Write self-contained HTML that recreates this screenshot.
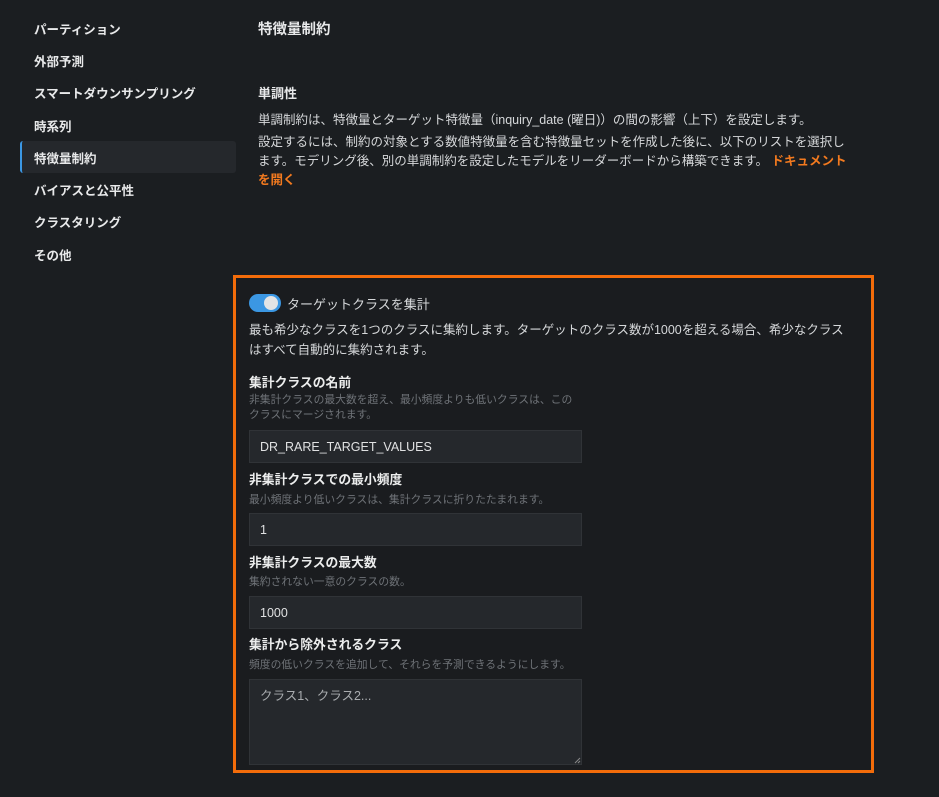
<!DOCTYPE html>
<html><head><meta charset="utf-8"><style>
*{margin:0;padding:0;box-sizing:border-box}
body{width:939px;height:797px;background:#1b1e21;color:#e8e9ea;font-family:"Liberation Sans","Noto Sans CJK JP",sans-serif;position:relative;overflow:hidden}
.a{position:absolute;white-space:nowrap}
.nav{left:34px;font-size:12.5px;font-weight:bold;color:#e8e9ea}
.sel{position:absolute;left:20px;top:141px;width:216px;height:32px;background:#25282c;border-left:2px solid #3b97e3;border-radius:3px}
.p{font-size:12.5px;color:#d6d8da}
.box{position:absolute;left:233px;top:275px;width:641px;height:498px;border:3px solid #f36c0a;background:#1a1c1f}
.lbl{font-size:12.8px;font-weight:bold;color:#eceded}
.hint{font-size:10.8px;color:#6f7378}
.inp{position:absolute;left:249px;width:333px;height:33px;background:#25282c;border:1px solid #303337;font-size:12.5px;color:#e0e1e2;padding:9px 10px;line-height:14px}
</style></head><body>
<div class="a nav" style="top:19px">パーティション</div>
<div class="a nav" style="top:51px">外部予測</div>
<div class="a nav" style="top:83px">スマートダウンサンプリング</div>
<div class="a nav" style="top:116px">時系列</div>
<div class="sel"></div>
<div class="a nav" style="top:148px">特徴量制約</div>
<div class="a nav" style="top:180px">バイアスと公平性</div>
<div class="a nav" style="top:212px">クラスタリング</div>
<div class="a nav" style="top:245px">その他</div>

<div class="a" style="left:258px;top:18px;font-size:14.5px;font-weight:bold">特徴量制約</div>
<div class="a" style="left:258px;top:83px;font-size:13px;font-weight:bold">単調性</div>
<div class="a p" style="left:258px;top:109px">単調制約は、特徴量とターゲット特徴量（inquiry_date (曜日)）の間の影響（上下）を設定します。</div>
<div class="a p" style="left:258px;top:133px;line-height:19px">設定するには、制約の対象とする数値特徴量を含む特徴量セットを作成した後に、以下のリストを選択し<br>ます。モデリング後、別の単調制約を設定したモデルをリーダーボードから構築できます。 <b style="color:#f37a1f">ドキュメント</b><br><b style="color:#f37a1f">を開く</b></div>

<div class="box"></div>
<div style="position:absolute;left:249px;top:294px;width:32px;height:18px;border-radius:9px;background:#3b97e3"></div>
<div style="position:absolute;left:264px;top:296px;width:14px;height:14px;border-radius:7px;background:#e3e4e5"></div>
<div class="a p" style="left:287px;top:294px;font-size:13px">ターゲットクラスを集計</div>
<div class="a p" style="left:249px;top:320px;line-height:20px">最も希少なクラスを1つのクラスに集約します。ターゲットのクラス数が1000を超える場合、希少なクラス<br>はすべて自動的に集約されます。</div>

<div class="a lbl" style="left:249px;top:372px">集計クラスの名前</div>
<div class="a hint" style="left:249px;top:393px;line-height:15px">非集計クラスの最大数を超え、最小頻度よりも低いクラスは、この<br>クラスにマージされます。</div>
<div class="inp" style="top:430px">DR_RARE_TARGET_VALUES</div>

<div class="a lbl" style="left:249px;top:469px">非集計クラスでの最小頻度</div>
<div class="a hint" style="left:249px;top:491px">最小頻度より低いクラスは、集計クラスに折りたたまれます。</div>
<div class="inp" style="top:513px">1</div>

<div class="a lbl" style="left:249px;top:552px">非集計クラスの最大数</div>
<div class="a hint" style="left:249px;top:573px">集約されない一意のクラスの数。</div>
<div class="inp" style="top:596px">1000</div>

<div class="a lbl" style="left:249px;top:634px">集計から除外されるクラス</div>
<div class="a hint" style="left:249px;top:656px">頻度の低いクラスを追加して、それらを予測できるようにします。</div>
<div class="inp" style="top:679px;height:86px;color:#a9acaf">クラス1、クラス2...</div>
<svg style="position:absolute;left:574px;top:757px" width="7" height="7"><path d="M1 6L6 1M4 6L6 4" stroke="#888" stroke-width="1"/></svg>
</body></html>
